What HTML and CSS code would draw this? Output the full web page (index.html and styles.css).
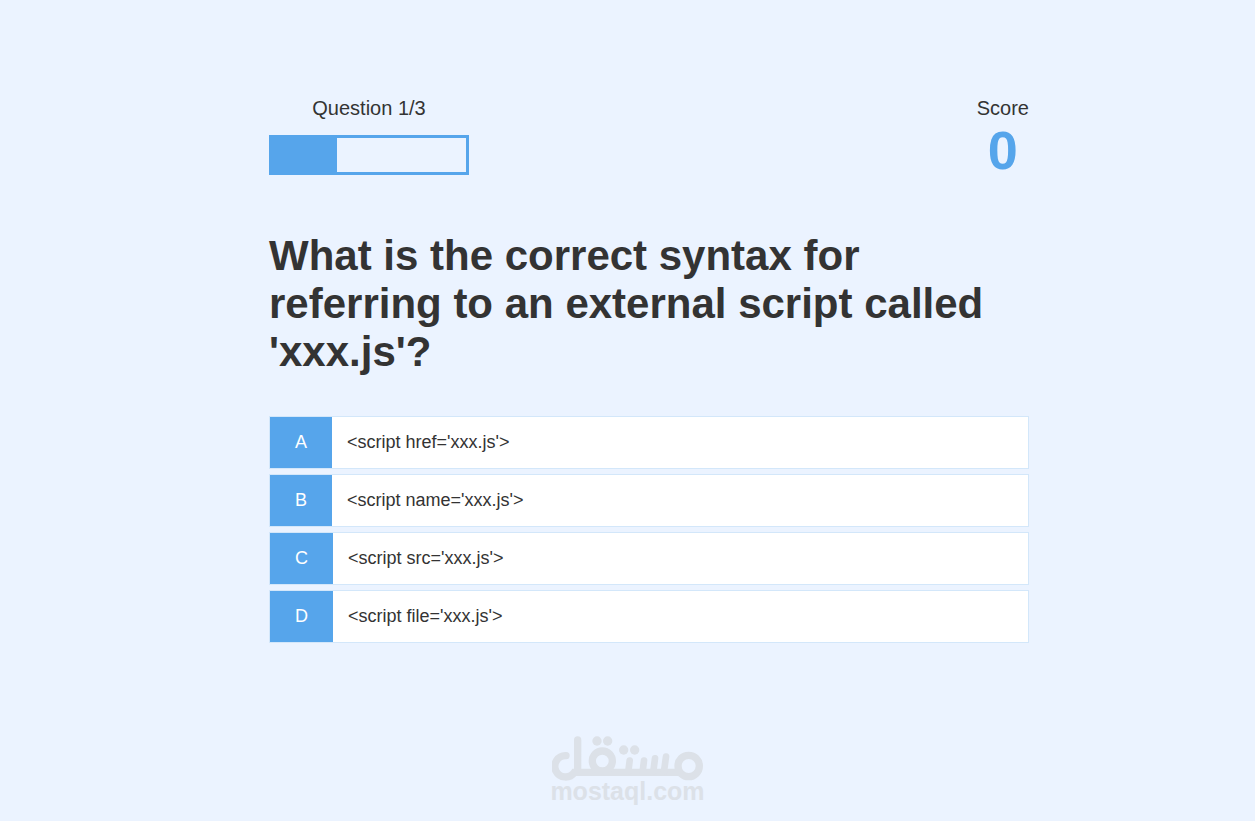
FILE: index.html
```html
<!DOCTYPE html>
<html lang="en">
<head>
    <meta charset="UTF-8">
    <meta name="viewport" content="width=device-width, initial-scale=1.0">
    <title>Quick Quiz - Play</title>
    <link rel="stylesheet" href="styles.css">
</head>
<body>
    <main class="container">
        <div class="game">
            <div class="hud">
                <div class="hud-item">
                    <p class="hud-prefix" id="progressText">Question 1/3</p>
                    <div class="progress-bar" role="progressbar" aria-labelledby="progressText" aria-valuemin="0" aria-valuemax="3" aria-valuenow="1">
                        <div class="progress-bar-full" style="width: 33.33%"></div>
                    </div>
                </div>
                <div class="hud-item">
                    <p class="hud-prefix">Score</p>
                    <p class="hud-main-text">0</p>
                </div>
            </div>

            <h1 class="question">What is the correct syntax for referring to an external script called 'xxx.js'?</h1>

            <div class="choices">
                <button class="choice" type="button">
                    <span class="choice-prefix">A</span>
                    <span class="choice-text">&lt;script href='xxx.js'&gt;</span>
                </button>
                <button class="choice" type="button">
                    <span class="choice-prefix">B</span>
                    <span class="choice-text">&lt;script name='xxx.js'&gt;</span>
                </button>
                <button class="choice" type="button">
                    <span class="choice-prefix">C</span>
                    <span class="choice-text">&lt;script src='xxx.js'&gt;</span>
                </button>
                <button class="choice" type="button">
                    <span class="choice-prefix">D</span>
                    <span class="choice-text">&lt;script file='xxx.js'&gt;</span>
                </button>
            </div>
        </div>
    </main>

    <footer class="brand">
        <svg class="brand-logo" viewBox="36 32 453 135" aria-hidden="true">
            <!-- lam and the base line -->
            <path class="stroke" d="M78 91 A32 32 0 1 0 103 141 H412 M113 44 V136"/>
            <!-- qaf and meem -->
            <circle class="stroke" cx="187" cy="107" r="30"/>
            <circle class="stroke" cx="446" cy="122" r="32"/>
            <!-- teeth -->
            <path class="stroke teeth" d="M269 106 L265 138 M312 106 L308 138 M345 99 L340 138 M378 94 L372 138"/>
            <circle cx="171" cy="47" r="14"/>
            <circle cx="203" cy="47" r="14"/>
            <circle cx="251" cy="74" r="14"/>
            <circle cx="284" cy="74" r="14"/>
        </svg>
        <p class="brand-name">mostaql.com</p>
    </footer>
</body>
</html>
```
FILE: styles.css
```css
* {
    box-sizing: border-box;
    margin: 0;
    padding: 0;
    font-family: Arial, "Liberation Sans", Helvetica, sans-serif;
}

body {
    min-height: 100vh;
    display: flex;
    flex-direction: column;
    background-color: #ebf3ff;
    color: #333;
}

.container {
    display: flex;
    justify-content: center;
    padding: 96px 0 40px 43px;
}

.game {
    width: 100%;
    max-width: 760px;
}

/* HUD */
.hud {
    display: flex;
    justify-content: space-between;
    margin-bottom: 52px;
}

.hud-item {
    text-align: center;
}

.hud-prefix {
    font-size: 20px;
    line-height: 24px;
}

.hud-main-text {
    font-size: 54px;
    line-height: 60px;
    font-weight: bold;
    color: #56a5eb;
}

.progress-bar {
    width: 200px;
    height: 40px;
    margin-top: 15px;
    border: 3px solid #56a5eb;
}

.progress-bar-full {
    height: 100%;
    background-color: #56a5eb;
}

.question {
    font-size: 42px;
    line-height: 48px;
    margin-bottom: 40px;
}

/* Choices */
.choices {
    display: flex;
    flex-direction: column;
    gap: 5px;
}

.choice {
    display: flex;
    width: 100%;
    border: 1px solid #d3e7fa;
    background-color: #fff;
    color: #333;
    font-size: 18px;
    line-height: 21px;
    text-align: left;
    cursor: pointer;
}

.choice:hover {
    box-shadow: 0 4px 14px rgba(86, 165, 235, 0.5);
}

.choice-prefix {
    padding: 15px 25px;
    background-color: #56a5eb;
    color: #fff;
}

.choice-text {
    flex: 1;
    padding: 15px;
}

/* Brand */
.brand {
    display: flex;
    flex-direction: column;
    align-items: center;
    margin-top: auto;
    padding-bottom: 20px;
    color: #dce1e8;
}

.brand-logo {
    width: 151px;
    height: 45px;
    fill: currentColor;
}

.brand-logo .stroke {
    fill: none;
    stroke: currentColor;
    stroke-width: 22;
    stroke-linecap: round;
}

.brand-logo .teeth {
    stroke-width: 20;
}

.brand-name {
    font-size: 25px;
    line-height: 20px;
    font-weight: bold;
}
```
